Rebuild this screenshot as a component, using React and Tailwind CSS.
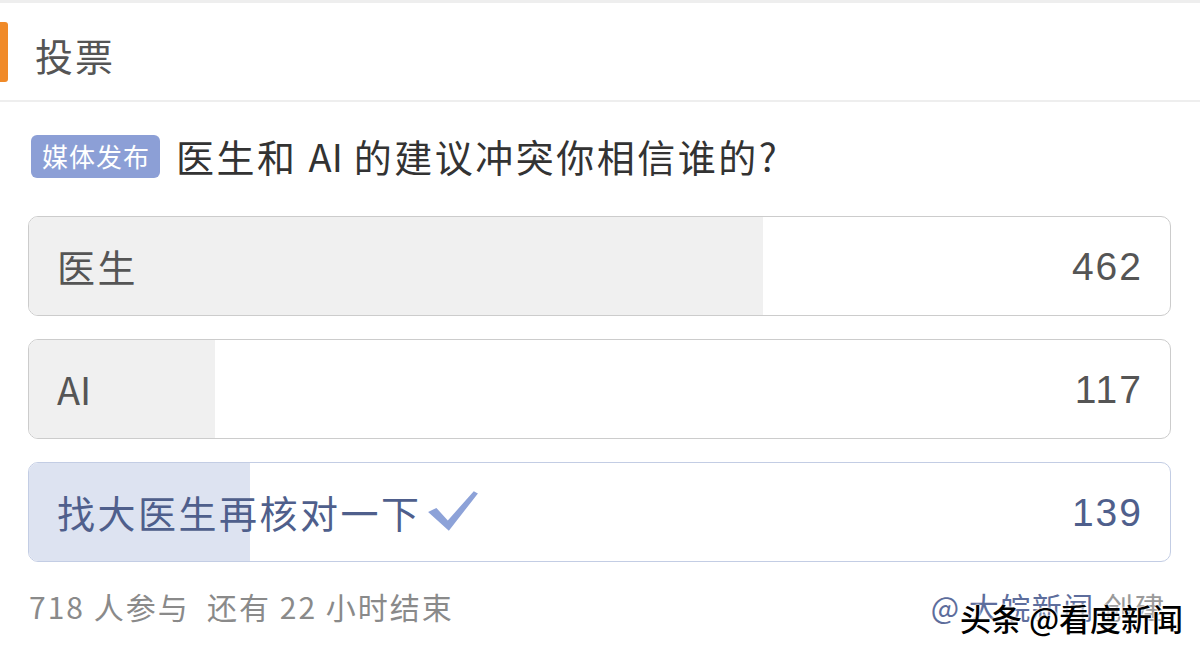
const options = [
  { label: '医生', count: 462 },
  { label: 'AI', count: 117, latin: true },
  { label: '找大医生再核对一下', count: 139, chosen: true },
]

const total = 718

function Check() {
  return (
    <svg width="54" height="42" viewBox="0 0 52 40" className="ml-[4px] mb-[4px]">
      <path d="M2 22 L10 18 L21 30 L46 2 L50 4 L22 40 Z" fill="#8da2d8" />
    </svg>
  )
}

export default function App() {
  return (
    <div
      className="w-[1200px] h-[653px] bg-white overflow-hidden relative"
      style={{ fontFamily: '"Noto Sans CJK SC", "Noto Sans", sans-serif' }}
    >
      <div className="h-[3px] bg-[#eeeeee]" />
      {/* Header */}
      <div className="h-[99px] flex items-center border-b-2 border-[#eeeeee]">
        <div className="w-[8px] h-[60px] bg-[#f08a28] rounded-r-[3px]" />
        <span className="ml-[27px] mt-[6px] text-[38px] tracking-[2px] text-[#555555] leading-none">投票</span>
      </div>

      {/* Question */}
      <div className="h-[114px] flex items-center pl-[31px] pb-[6px]">
        <span className="h-[43px] pl-[11px] pr-[10px] flex items-center rounded-[6px] bg-[#8c9fd6] text-white text-[26px] tracking-[1px] leading-none">
          媒体发布
        </span>
        <span className="ml-[16px] text-[38px] tracking-[2.5px] text-[#333333] leading-none">
          医生和 <span className="tracking-normal">AI</span> 的建议冲突你相信谁的?
        </span>
      </div>

      {/* Options */}
      <div className="flex flex-col gap-[23px] pl-[28px] pr-[29px]">
        {options.map((o) => (
          <div
            key={o.label}
            className={`relative h-[100px] rounded-[10px] border-[1.5px] overflow-hidden ${
              o.chosen ? 'border-[#c3cde4]' : 'border-[#cccccc]'
            }`}
          >
            <div
              className={`absolute left-0 top-0 bottom-0 ${o.chosen ? 'bg-[#dde3f1]' : 'bg-[#f0f0f0]'}`}
              style={{ width: `${(o.count / total) * 100}%` }}
            />
            <div className="relative h-full flex items-center justify-between pl-[28px] pr-[27px]">
              <div className="flex items-center">
                <span
                  className={`text-[38px] leading-none ${o.latin ? 'tracking-normal' : 'tracking-[2.5px]'} ${
                    o.chosen ? 'text-[#4f5f8c]' : 'text-[#555555]'
                  }`}
                >
                  {o.label}
                </span>
                {o.chosen && <Check />}
              </div>
              <span
                className={`text-[39px] tracking-[2px] leading-none ${o.chosen ? 'text-[#4f5f8c]' : 'text-[#555555]'}`}
                style={{ fontFamily: '"Liberation Sans", sans-serif' }}
              >
                {o.count}
              </span>
            </div>
          </div>
        ))}
      </div>

      {/* Footer */}
      <div className="flex items-center justify-between pl-[29px] pr-[34px] mt-[29px]">
        <span className="text-[30px] tracking-[2px] text-[#8a8a8a] leading-none">718 人参与&nbsp;&nbsp;还有 22 小时结束</span>
        <span className="text-[30px] tracking-[1.5px] leading-none">
          <span className="text-[#5d6d9c]">@ 大皖新闻</span>
          <span className="text-[#9a9a9a]"> 创建</span>
        </span>
      </div>

      {/* Watermark */}
      <div
        className="absolute left-[960px] top-[602px] text-[31px] leading-none text-black font-medium"
        style={{ textShadow: '0 0 2px #fff, 0 0 2px #fff, 0 0 3px #fff' }}
      >
        头条 @看度新闻
      </div>
    </div>
  )
}
